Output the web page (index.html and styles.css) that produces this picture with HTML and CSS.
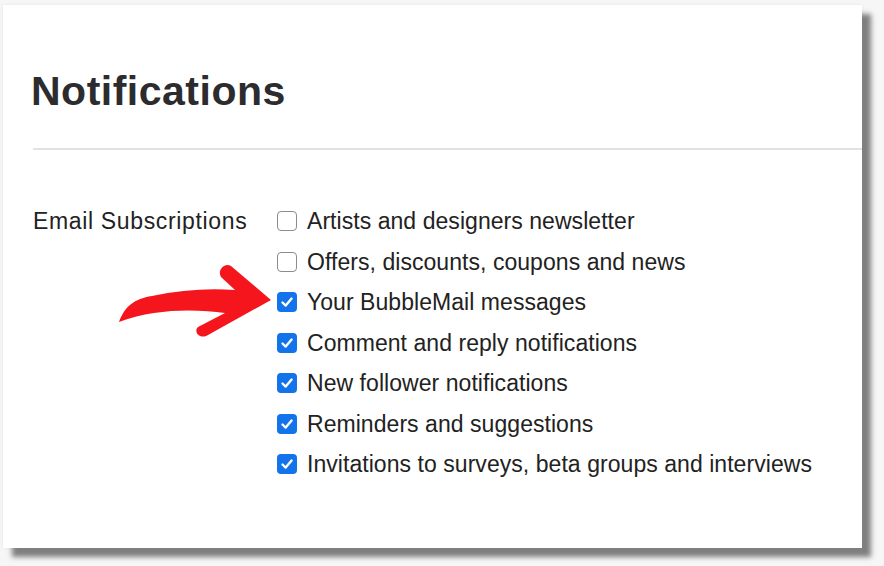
FILE: index.html
```html
<!DOCTYPE html>
<html>
<head>
<meta charset="utf-8">
<link rel="stylesheet" href="styles.css">
</head>
<body>
<div class="card">
  <h1 class="title">Notifications</h1>
  <div class="divider"></div>
  <div class="section">
    <div class="section-label">Email Subscriptions</div>
    <div class="options">
      <div class="option"><span class="box"></span><span>Artists and designers newsletter</span></div>
      <div class="option"><span class="box"></span><span>Offers, discounts, coupons and news</span></div>
      <div class="option"><span class="box checked"><svg viewBox="0 0 20 20"><path d="M5.5 10.5 L8.7 13.6 L14.6 6.6" /></svg></span><span>Your BubbleMail messages</span></div>
      <div class="option"><span class="box checked"><svg viewBox="0 0 20 20"><path d="M5.5 10.5 L8.7 13.6 L14.6 6.6" /></svg></span><span>Comment and reply notifications</span></div>
      <div class="option"><span class="box checked"><svg viewBox="0 0 20 20"><path d="M5.5 10.5 L8.7 13.6 L14.6 6.6" /></svg></span><span>New follower notifications</span></div>
      <div class="option"><span class="box checked"><svg viewBox="0 0 20 20"><path d="M5.5 10.5 L8.7 13.6 L14.6 6.6" /></svg></span><span>Reminders and suggestions</span></div>
      <div class="option"><span class="box checked"><svg viewBox="0 0 20 20"><path d="M5.5 10.5 L8.7 13.6 L14.6 6.6" /></svg></span><span>Invitations to surveys, beta groups and interviews</span></div>
    </div>
  </div>
  <svg class="arrow" viewBox="117 260 160 80" width="160" height="80">
    <path d="M119,322 C125,306 134,299 152,296 C180,290 208,288 235,290 L221,277 C217,271 224,262 231,266 L271,300 L208,335 C200,340 193,332 198,327 L225,313 C196,309 156,308 119,322 Z" fill="#f4161c"/>
  </svg>
</div>
</body>
</html>
```
FILE: styles.css
```css
html, body {
  margin: 0;
  padding: 0;
}
body {
  background: #f6f6f6;
  width: 884px;
  height: 566px;
  overflow: hidden;
  font-family: "Liberation Sans", Arial, sans-serif;
}
.card {
  position: relative;
  margin: 5px 0 0 3px;
  width: 859px;
  height: 543px;
  background: #ffffff;
  box-shadow: 9px 9px 5px #7f7f7f, 0 0 3px rgba(0,0,0,0.08);
  padding-left: 28px;
  box-sizing: border-box;
}
.title {
  margin: 0;
  padding-top: 62px;
  font-size: 41px;
  letter-spacing: 0.5px;
  line-height: 48px;
  font-weight: bold;
  color: #2c2c2f;
}
.divider {
  margin-top: 33px;
  margin-left: 2px;
  height: 2px;
  background: #e2e2e2;
}
.section {
  display: flex;
  margin-top: 51px;
}
.section-label {
  width: 244px;
  padding-left: 2px;
  font-size: 23px;
  letter-spacing: 0.65px;
  line-height: 40.5px;
  color: #222;
}
.options {
  display: flex;
  flex-direction: column;
}
.option {
  display: flex;
  align-items: center;
  gap: 10px;
  font-size: 23px;
  letter-spacing: 0.05px;
  line-height: 40.5px;
  color: #222;
}
.box {
  width: 20px;
  height: 20px;
  box-sizing: border-box;
  border: 1.6px solid #8c8c8c;
  border-radius: 4px;
  background: #fff;
  display: flex;
}
.box.checked {
  border: none;
  background: #1273ea;
}
.box svg {
  width: 20px;
  height: 20px;
}
.box svg path {
  fill: none;
  stroke: #fff;
  stroke-width: 2.4;
  stroke-linecap: round;
  stroke-linejoin: round;
}
.arrow {
  position: absolute;
  left: 114px;
  top: 255px;
}
```
